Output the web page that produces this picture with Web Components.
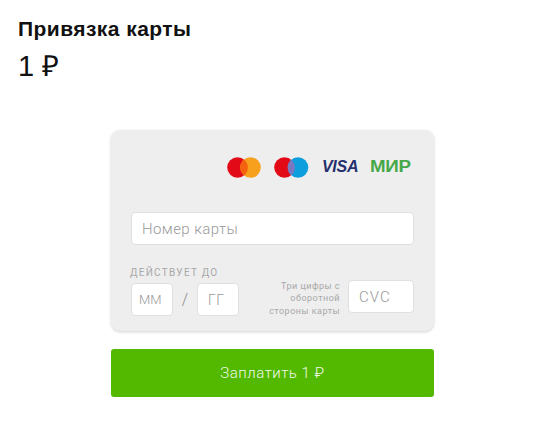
<!DOCTYPE html>
<html lang="ru">
<head>
<meta charset="utf-8">
<title>Привязка карты</title>
<style>
  html, body { margin: 0; background: #fff; }
  body { font-family: "Liberation Sans", Arial, sans-serif; overflow: hidden; }
</style>
</head>
<body>
<pay-page>
  <pay-header title="Привязка карты" amount="1 ₽"></pay-header>
  <card-form></card-form>
  <pay-button>Заплатить 1 ₽</pay-button>
</pay-page>

<script>
class PayPage extends HTMLElement {
  constructor() {
    super();
    this.attachShadow({ mode: 'open' });
  }
  connectedCallback() {
    this.shadowRoot.innerHTML = `
      <style>
        :host { display: block; width: 550px; height: 424px; box-sizing: border-box; padding: 17px 0 0; }
        .center { width: 323px; margin: 48px 0 0 111px; display: flex; flex-direction: column; gap: 18px; }
      </style>
      <slot name="top"></slot>
      <div class="center"><slot></slot></div>
    `;
    this.querySelector('pay-header').setAttribute('slot', 'top');
  }
}

class PayHeader extends HTMLElement {
  constructor() {
    super();
    this.attachShadow({ mode: 'open' });
  }
  connectedCallback() {
    this.shadowRoot.innerHTML = `
      <style>
        :host { display: block; padding-left: 18px; color: #111; font-family: "Liberation Sans", Arial, sans-serif; }
        h1 { margin: 0; font-size: 21px; line-height: 24px; font-weight: 700; letter-spacing: .45px; }
        p { margin: 9px 0 0; font-size: 29px; line-height: 32px; font-weight: 400; }
      </style>
      <h1>${this.getAttribute('title')}</h1>
      <p>${this.getAttribute('amount')}</p>
    `;
  }
}

class CardLogos extends HTMLElement {
  constructor() {
    super();
    this.attachShadow({ mode: 'open' });
  }
  connectedCallback() {
    this.shadowRoot.innerHTML = `
      <style>
        :host { display: flex; justify-content: flex-end; align-items: center; height: 24px; padding-right: 3px; }
        svg { display: block; }
        .mc { margin-right: 13px; }
        .maestro { margin-right: 13px; }
        .visa { font: italic 700 16px/24px "Liberation Sans", sans-serif; color: #25306e; width: 37px; margin-right: 11px; letter-spacing: -.3px; white-space: nowrap; }
        .mir { display: block; width: 41px; font: 700 16px/24px "Liberation Sans", sans-serif; color: #46a848; letter-spacing: -.2px; white-space: nowrap; transform: scaleX(1.17); transform-origin: left center; }
      </style>
      <svg class="mc" width="34" height="21" viewBox="0 0 34 21">
        <circle cx="10.5" cy="10.5" r="10.3" fill="#e30a17"/>
        <circle cx="23.5" cy="10.5" r="10.3" fill="#f7a01d"/>
        <path d="M17 2.5a10.3 10.3 0 0 1 0 16a10.3 10.3 0 0 1 0-16z" fill="#f4620f"/>
      </svg>
      <svg class="maestro" width="35" height="21" viewBox="0 0 35 21">
        <circle cx="10.5" cy="10.5" r="10.3" fill="#e30a17"/>
        <circle cx="24" cy="10.5" r="10.3" fill="#0d9fdd"/>
        <path d="M17.25 2.7a10.3 10.3 0 0 1 0 15.6a10.3 10.3 0 0 1 0-15.6z" fill="#7a78c0"/>
      </svg>
      <span class="visa">VISA</span>
      <span class="mir">МИР</span>
    `;
  }
}

class TextBox extends HTMLElement {
  constructor() {
    super();
    this.attachShadow({ mode: 'open' });
  }
  connectedCallback() {
    const w = this.getAttribute('w');
    this.shadowRoot.innerHTML = `
      <style>
        :host { display: block; box-sizing: border-box; height: 33px; ${w ? `width: ${w}px;` : ''} flex: none;
          background: #fff; border: 1px solid #e0e0e0; border-radius: 4px; }
        input { display: block; width: 100%; height: 100%; box-sizing: border-box; border: 0; background: transparent; outline: 0;
          padding: 0 0 0 ${this.getAttribute('pad') || 10}px; font: 300 ${this.getAttribute('size') || 15}px Roboto, sans-serif;
          letter-spacing: ${this.getAttribute('ls') || .4}px; }
        input::placeholder { color: #999; opacity: 1; }
      </style>
      <input placeholder="${this.getAttribute('placeholder')}">
    `;
  }
}

class CardForm extends HTMLElement {
  constructor() {
    super();
    this.attachShadow({ mode: 'open' });
  }
  connectedCallback() {
    this.shadowRoot.innerHTML = `
      <style>
        :host { display: block; box-sizing: border-box; height: 201px; padding: 25px 20px 15px; background: #eeeeee; border-radius: 9px;
          box-shadow: 0 1px 3px rgba(0,0,0,.18); font-family: Roboto, sans-serif; }
        .number { margin-top: 33px; }
        .bottom { display: flex; justify-content: space-between; align-items: flex-end; margin-top: 22px; }
        .label { font-size: 10px; line-height: 12px; letter-spacing: 1.25px; color: #a8a8a8; margin: 0 0 4px -1px; font-weight: 400; }
        .expiry { display: flex; align-items: center; }
        .slash { width: 24px; text-align: center; color: #8a8a8a; font-size: 16px; font-weight: 300; }
        .cvc { display: flex; align-items: flex-end; gap: 8px; }
        .cvc text-box { margin-bottom: 3px; }
        .hint { font-size: 9px; line-height: 12.5px; letter-spacing: .5px; text-align: right; color: #a8a8a8; margin-bottom: -1px; }
      </style>
      <card-logos></card-logos>
      <text-box class="number" placeholder="Номер карты"></text-box>
      <div class="bottom">
        <div>
          <div class="label">ДЕЙСТВУЕТ ДО</div>
          <div class="expiry">
            <text-box w="42" placeholder="ММ" size="13" pad="7" ls="0"></text-box>
            <span class="slash">/</span>
            <text-box w="42" placeholder="ГГ" size="14" pad="10" ls="0.4"></text-box>
          </div>
        </div>
        <div class="cvc">
          <div class="hint">Три цифры с<br>оборотной<br>стороны карты</div>
          <text-box w="66" placeholder="CVC" pad="10" ls="1"></text-box>
        </div>
      </div>
    `;
  }
}

class PayButton extends HTMLElement {
  constructor() {
    super();
    this.attachShadow({ mode: 'open' });
  }
  connectedCallback() {
    this.shadowRoot.innerHTML = `
      <style>
        :host { display: block; }
        button { display: block; width: 100%; height: 48px; border: 0; border-radius: 3px; background: #53b800; color: #f2f9ea;
          font: 300 15px Roboto, sans-serif; letter-spacing: .5px; cursor: pointer; }
      </style>
      <button type="button"><slot></slot></button>
    `;
  }
}

customElements.define('pay-page', PayPage);
customElements.define('pay-header', PayHeader);
customElements.define('card-logos', CardLogos);
customElements.define('text-box', TextBox);
customElements.define('card-form', CardForm);
customElements.define('pay-button', PayButton);
</script>
</body>
</html>
